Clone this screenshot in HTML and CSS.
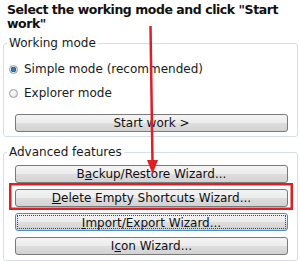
FILE: index.html
```html
<html>
<head>
    <meta charset="UTF-8">
    <meta name="viewport" content="width=device-width, initial-scale=1.0">
    <title>Working mode</title>
    <link rel="stylesheet" href="styles.css">
</head>

<body>
<div class="page">
    <div class="title">Select the working mode and click "Start<br>work"</div>

    <fieldset class="group group_mode">
        <legend>Working mode</legend>
        <div class="group_body">
            <label class="option"><span class="radio checked"></span>Simple mode (recommended)</label>
            <label class="option"><span class="radio"></span>Explorer mode</label>
            <div class="btn">Start work &gt;</div>
        </div>
    </fieldset>

    <fieldset class="group group_adv">
        <legend>Advanced features</legend>
        <div class="group_body">
            <div class="btn">B<u>a</u>ckup/Restore Wizard...</div>
            <div class="btn"><u>D</u>elete Empty Shortcuts Wizard...</div>
            <div class="btn focused"><span class="focus_ring"><u>I</u>mport/Export Wizard...</span></div>
            <div class="btn">I<u>c</u>on Wizard...</div>
        </div>
    </fieldset>

    <svg class="marks" width="300" height="261" viewBox="0 0 300 261">
        <line x1="150.5" y1="26" x2="152.5" y2="163" stroke="#e01f25" stroke-width="2.5"/>
        <polygon points="147,160 158,160 152.5,174" fill="#e01f25"/>
        <rect x="10.25" y="184.25" width="281.5" height="24.5" fill="none" stroke="#e01f25" stroke-width="2.5"/>
    </svg>
</div>
</body>
</html>
```

FILE: styles.css
```css
* {
    margin: 0;
    padding: 0;
    box-sizing: border-box;
}

body {
    background: white;
    font-family: "DejaVu Sans", Verdana, sans-serif;
    font-size: 12px;
    color: #1a1a1a;
}

.page {
    position: relative;
    width: 300px;
    height: 261px;
    overflow: hidden;
}

.title {
    font-size: 12.5px;
    font-weight: bold;
    letter-spacing: -0.45px;
    line-height: 14px;
    padding: 3px 0 0 7px;
    white-space: nowrap;
    color: #111;
}

.group {
    margin: 5px 2px 0 3px;
    border: 1px solid #d5dfe5;
    border-radius: 3px;
    padding: 0;
    min-width: 0;
}

.group legend {
    margin-left: 3px;
    padding: 0 2px;
    line-height: 14px;
    font-size: 12px;
}

.group_body {
    display: flex;
    flex-direction: column;
    padding: 7px 9px 4px 11px;
}

.group_adv {
    margin-top: 8px;
}

.group_adv .group_body {
    padding-top: 6px;
    padding-bottom: 5px;
    gap: 6px;
}

.option {
    display: flex;
    align-items: center;
    height: 24px;
    margin-left: -6px;
}

.radio {
    width: 9px;
    height: 9px;
    margin: 0 6px 0 0;
    border: 1px solid #9a9c9e;
    border-radius: 50%;
    background: radial-gradient(circle at 40% 35%, #ffffff, #dcdcdc);
}

.radio.checked {
    background: radial-gradient(circle, #3d8fcf 0, #1d5d96 2.5px, #e9e9e9 3px, #d6d6d6 100%);
}

.btn {
    height: 18px;
    border: 1px solid #7a7a7a;
    border-radius: 3px;
    background: linear-gradient(#f4f4f4 0%, #ececec 50%, #dedede 51%, #d2d2d2 100%);
    text-align: center;
    line-height: 16px;
    color: #111;
}

.group_mode .btn {
    margin-top: 9px;
}

.btn u {
    text-decoration: underline;
    text-underline-offset: 1px;
}

.btn.focused {
    border-color: #4a90c8;
    padding: 1px;
}

.focus_ring {
    display: block;
    height: 14px;
    line-height: 14px;
    border: 1px dotted #444;
    border-radius: 1px;
}

.marks {
    position: absolute;
    left: 0;
    top: 0;
    pointer-events: none;
}
```
